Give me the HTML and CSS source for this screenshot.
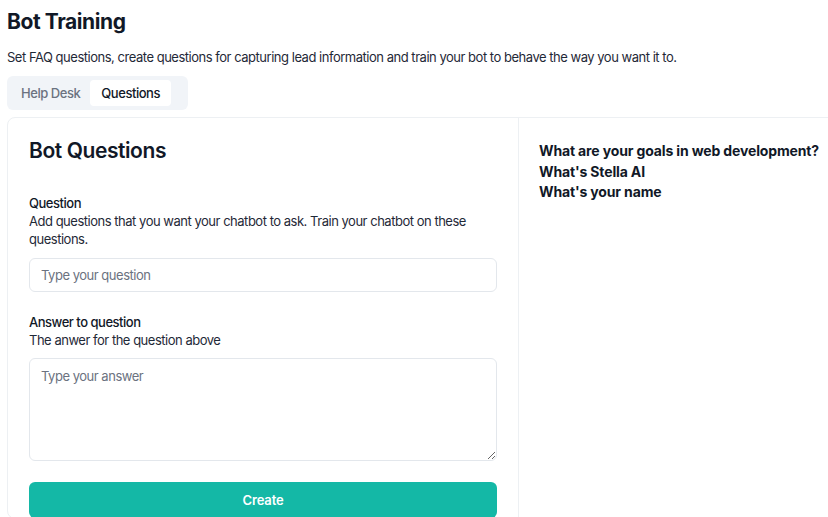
FILE: index.html
```html
<!DOCTYPE html>
<html lang="en">
<head>
  <meta charset="UTF-8">
  <meta name="viewport" content="width=device-width, initial-scale=1.0">
  <title>Bot Training</title>
  <link rel="stylesheet" href="styles.css">
</head>
<body>

<h1>Bot Training</h1>
<p class="lead">Set FAQ questions, create questions for capturing lead information and train your bot to behave the way you want it to.</p>

<div class="tabs">
  <button type="button" class="tab">Help Desk</button>
  <button type="button" class="tab active">Questions</button>
</div>

<div class="card">
  <form class="form-col">
    <h2>Bot Questions</h2>

    <div class="field">
      <label for="question">Question</label>
      <p class="hint">Add questions that you want your chatbot to ask. Train your chatbot on these questions.</p>
      <input id="question" type="text" placeholder="Type your question">
    </div>

    <div class="field">
      <label for="answer">Answer to question</label>
      <p class="hint">The anwer for the question above</p>
      <textarea id="answer" placeholder="Type your answer"></textarea>
    </div>

    <button type="button" class="create">Create</button>
  </form>

  <div class="list-col">
    <p>What are your goals in web development?</p>
    <p>What's Stella AI</p>
    <p>What's your name</p>
  </div>
</div>

</body>
</html>
```

FILE: styles.css
```css
html, body {
  overflow: hidden;
}
body {
  font-family: 'Inter', sans-serif;
  background: #fff;
  color: #111827;
  margin: 0;
  padding: 7px;
  letter-spacing: -0.03em;
}
h1 {
  font-size: 21px;
  font-weight: 700;
  margin: 2px 0 0;
  line-height: 26px;
  letter-spacing: -0.02em;
}
.lead {
  font-size: 13px;
  color: #1f2937;
  margin: 13px 0 0;
  line-height: 18px;
}
.tabs {
  display: inline-flex;
  margin-top: 10px;
  padding: 4px 17px 4px 4px;
  background: #f1f4f8;
  border-radius: 6px;
}
.tab {
  font-family: inherit;
  letter-spacing: -0.035em;
  font-size: 13px;
  font-weight: 500;
  color: #6b7280;
  background: none;
  border: none;
  padding: 0 10px;
  height: 26px;
  border-radius: 4px;
}
.tab.active {
  background: #fff;
  color: #111827;
  padding: 0 11px;
}
.card {
  display: grid;
  grid-template-columns: 511px 511px;
  width: 1022px;
  margin-top: 7px;
  border: 1px solid #edf0f3;
  border-radius: 8px;
}
.form-col {
  padding: 20px 21px 0;
  border-right: 1px solid #edf0f3;
}
h2 {
  font-size: 21px;
  font-weight: 600;
  margin: 0;
  line-height: 26px;
  letter-spacing: -0.02em;
}
.field {
  margin-top: 30px;
}
.field + .field {
  margin-top: 21px;
}
label {
  display: block;
  font-size: 13px;
  font-weight: 500;
  line-height: 18px;
}
.hint {
  font-size: 13px;
  margin: 0 0 10px;
  line-height: 18px;
  color: #1f2937;
}
.field + .field .hint {
  margin-bottom: 9px;
}
input, textarea {
  display: block;
  box-sizing: border-box;
  width: 100%;
  font-family: inherit;
  letter-spacing: inherit;
  font-size: 13px;
  color: #111827;
  border: 1px solid #e3e7ec;
  border-radius: 6px;
  padding: 0 11px;
  outline: none;
}
input {
  height: 34px;
}
textarea {
  height: 103px;
  padding-top: 9px;
  resize: vertical;
}
::placeholder {
  color: #6b7280;
}
.create {
  display: block;
  width: 100%;
  height: 36px;
  margin-top: 21px;
  font-family: inherit;
  letter-spacing: -0.01em;
  font-size: 13px;
  font-weight: 600;
  color: #fff;
  background: #14b8a6;
  border: none;
  border-radius: 6px;
}
.list-col {
  padding: 23px 20px;
}
.list-col p {
  font-size: 14px;
  font-weight: 700;
  margin: 0;
  line-height: 20.5px;
  letter-spacing: -0.01em;
}
```
